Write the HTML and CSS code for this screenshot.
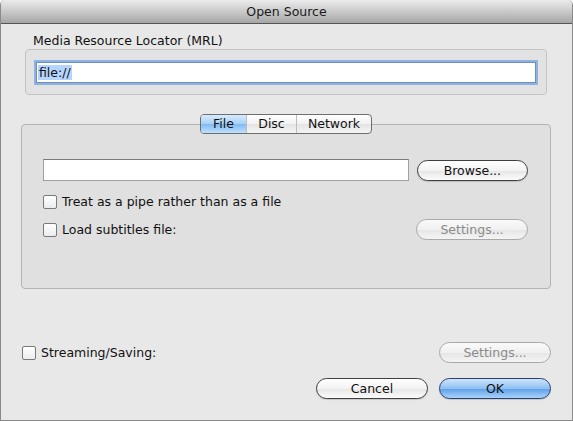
FILE: index.html
```html
<!DOCTYPE html>
<html lang="en">
<head>
    <meta charset="UTF-8">
    <title>Open Source</title>
    <link rel="stylesheet" href="styles.css">
</head>
<body>
    <div class="window">
        <div class="titlebar">Open Source</div>
        <div class="content">
            <p class="mrl-label">Media Resource Locator (MRL)</p>
            <div class="mrl-box">
                <div class="mrl-field"><span class="selected">file://</span></div>
            </div>

            <div class="tab-area">
                <div class="tabs">
                    <span class="tab active">File</span>
                    <span class="tab">Disc</span>
                    <span class="tab">Network</span>
                </div>
                <div class="tab-box">
                    <div class="path-row">
                        <div class="text-field"></div>
                        <span class="button">Browse...</span>
                    </div>
                    <label class="check-row"><span class="checkbox"></span>Treat as a pipe rather than as a file</label>
                    <div class="sub-row">
                        <label class="check-row"><span class="checkbox"></span>Load subtitles file:</label>
                        <span class="button disabled">Settings...</span>
                    </div>
                </div>
            </div>

            <div class="stream-row">
                <label class="check-row"><span class="checkbox"></span>Streaming/Saving:</label>
                <span class="button disabled">Settings...</span>
            </div>
            <div class="actions">
                <span class="button">Cancel</span>
                <span class="button default">OK</span>
            </div>
        </div>
    </div>
</body>
</html>
```

FILE: styles.css
```css
* {
    margin: 0;
    padding: 0;
    box-sizing: border-box;
}

body {
    background-color: #ffffff;
    font-family: "DejaVu Sans", sans-serif;
    font-size: 12.5px;
    color: #111;
}

.window {
    width: 573px;
    height: 421px;
    background-color: #e8e8e8;
    border: 1px solid #8a8a8a;
    border-top: 0;
    border-radius: 5px 5px 0 0;
    overflow: hidden;
}

.titlebar {
    height: 24px;
    line-height: 23px;
    text-align: center;
    font-size: 12.5px;
    color: #1a1a1a;
    background: linear-gradient(#ebebeb, #c9c9c9 50%, #a6a6a6);
    border-bottom: 1px solid #545454;
}

.content {
    padding: 9px 21px 0 20px;
}

.mrl-label {
    padding-left: 12px;
    line-height: 15px;
}

.mrl-box {
    margin: 1px 4px 0 4px;
    height: 46px;
    padding: 12px 10px 0 10px;
    background-color: #e2e2e2;
    border: 1px solid #c4c4c4;
    border-radius: 4px;
}

.mrl-field {
    height: 21px;
    background-color: #fff;
    border: 1px solid #6f8fb8;
    box-shadow: 0 0 0 2px #8cb3e4;
    padding: 2px 1px;
    line-height: 15px;
}

.selected {
    background-color: #b5d5ff;
    padding: 0 1px;
}

.tab-area {
    margin-top: 19px;
}

.tabs {
    display: flex;
    width: 172px;
    height: 20px;
    margin: 0 auto -10px auto;
    position: relative;
    border: 1px solid #6e6e6e;
    border-radius: 4px;
    overflow: hidden;
    background: linear-gradient(#ffffff, #f1f1f1 50%, #e4e4e4 51%, #f4f4f4);
    line-height: 18px;
}

.tab {
    text-align: center;
    border-left: 1px solid #bdbdbd;
}

.tab:nth-child(1) {
    width: 45px;
    border-left: 0;
}

.tab:nth-child(2) {
    width: 50px;
}

.tab:nth-child(3) {
    flex: 1;
}

.tab.active {
    background: linear-gradient(#d7ebfd, #a7d0f8 50%, #7fbaf4 51%, #bfe0fd);
}

.tab-box {
    height: 165px;
    background-color: #e0e0e0;
    border: 1px solid #b3b3b3;
    border-radius: 4px;
    padding: 34px 22px 0 21px;
}

.path-row {
    display: flex;
    align-items: center;
    gap: 8px;
}

.text-field {
    width: 368px;
    height: 22px;
    background-color: #fff;
    border: 1px solid #a0a0a0;
    border-top-color: #7b7b7b;
}

.button {
    display: inline-block;
    width: 112px;
    height: 21px;
    line-height: 19px;
    text-align: center;
    border: 1px solid #3f3f3f;
    border-radius: 11px;
    background: linear-gradient(#ffffff, #f3f3f3 50%, #e6e6e6 51%, #fbfbfb);
    box-shadow: 0 1px 1px rgba(0, 0, 0, 0.15);
}

.button.disabled {
    color: #8a8a8a;
    border-color: #a9a9a9;
    background: linear-gradient(#fafafa, #f0f0f0 50%, #e6e6e6 51%, #f4f4f4);
    box-shadow: none;
}

.button.default {
    border-color: #2a3f73;
    background: linear-gradient(#cfe5fb, #8fc0f1 50%, #5d9fe6 51%, #a9d3fb);
}

.check-row {
    display: flex;
    align-items: center;
    gap: 5px;
    line-height: 15px;
}

.checkbox {
    width: 14px;
    height: 14px;
    border: 1px solid #7a7a7a;
    border-radius: 2px;
    background: linear-gradient(#ffffff, #ececec);
}

.tab-box > .check-row {
    margin-top: 13px;
}

.sub-row {
    display: flex;
    align-items: center;
    justify-content: space-between;
    margin-top: 10px;
}

.stream-row {
    display: flex;
    align-items: center;
    justify-content: space-between;
    margin-top: 53px;
    margin-left: 1px;
}

.actions {
    display: flex;
    justify-content: flex-end;
    gap: 11px;
    margin-top: 15px;
}
```
